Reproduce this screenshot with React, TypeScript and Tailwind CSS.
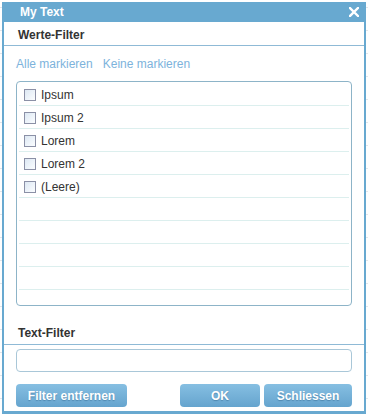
import React from "react";

const VALUES = ["Ipsum", "Ipsum 2", "Lorem", "Lorem 2", "(Leere)"];

function Checkbox() {
  return (
    <span className="w-[12px] h-[12px] shrink-0 border border-[#8b90a6] bg-gradient-to-br from-[#dde8f3] to-[#fbfdff]" />
  );
}

function Button({ label, width }: { label: string; width: string }) {
  return (
    <button
      className={`${width} h-[23px] rounded-[4px] bg-gradient-to-b from-[#86bfe2] to-[#65a4ce] text-white text-[12px] font-bold [text-shadow:0_1px_1px_rgba(40,90,130,0.45)]`}
    >
      {label}
    </button>
  );
}

export default function App() {
  const rows = Array.from({ length: 9 }, (_, i) => VALUES[i]);

  return (
    <div
      className="w-[368px] h-[417px] pt-[2px] pl-[2px] bg-white bg-[repeating-linear-gradient(to_bottom,transparent_0,transparent_7px,#e3e6ea_7px,#e3e6ea_8px,transparent_8px,transparent_23px)]"
      style={{ fontFamily: "'Liberation Sans', Arial, sans-serif" }}
    >
      {/* Window */}
      <div className="w-[364px] h-[412px] bg-white border-x-2 border-b-[3px] border-[#68a9d0] flex flex-col">
        {/* Title bar */}
        <div className="h-[20px] bg-[#68a9d0] flex items-center justify-between pl-[16px] pr-[5px] shrink-0">
          <span className="text-white text-[12px] font-bold">My Text</span>
          <svg width="10" height="10" viewBox="0 0 10 10" className="mb-[1px]">
            <path d="M1 1 L9 9 M9 1 L1 9" stroke="white" strokeWidth="2.4" strokeLinecap="square" />
          </svg>
        </div>

        {/* Werte-Filter header */}
        <div className="h-[24px] shrink-0 border-b border-[#8fbad6] flex items-center pl-[14px] pt-[2px]">
          <span className="text-[12px] font-bold text-[#333]">Werte-Filter</span>
        </div>

        <div className="h-[35px] shrink-0 flex items-center gap-[10px] pl-[12px] pt-[1px] text-[12px] text-[#7db3dc]">
          <span>Alle markieren</span>
          <span>Keine markieren</span>
        </div>

        {/* Value list */}
        <div className="mx-[12px] h-[225px] shrink-0 border border-[#8db4c8] rounded-[4px] px-[2px] pt-[1px]">
          {rows.map((v, i) => (
            <div
              key={i}
              className="h-[23px] border-b border-[#dcefee] flex items-center gap-[5px] pl-[5px] pt-[2px]"
            >
              {v && (
                <>
                  <Checkbox />
                  <span className="text-[12px] text-[#333]">{v}</span>
                </>
              )}
            </div>
          ))}
        </div>

        {/* Text-Filter header */}
        <div className="mt-[15px] h-[24px] shrink-0 border-b border-[#8fbad6] flex items-center pl-[14px] pt-[1px]">
          <span className="text-[12px] font-bold text-[#333]">Text-Filter</span>
        </div>

        <div className="mt-[4px] mx-[12px] h-[23px] shrink-0 border border-[#a9c7d8] rounded-[4px]" />

        {/* Buttons */}
        <div className="mt-[12px] mx-[12px] flex items-center">
          <Button label="Filter entfernen" width="w-[111px]" />
          <div className="flex-1" />
          <div className="flex gap-[4px]">
            <Button label="OK" width="w-[80px]" />
            <Button label="Schliessen" width="w-[88px]" />
          </div>
        </div>
      </div>
    </div>
  );
}
